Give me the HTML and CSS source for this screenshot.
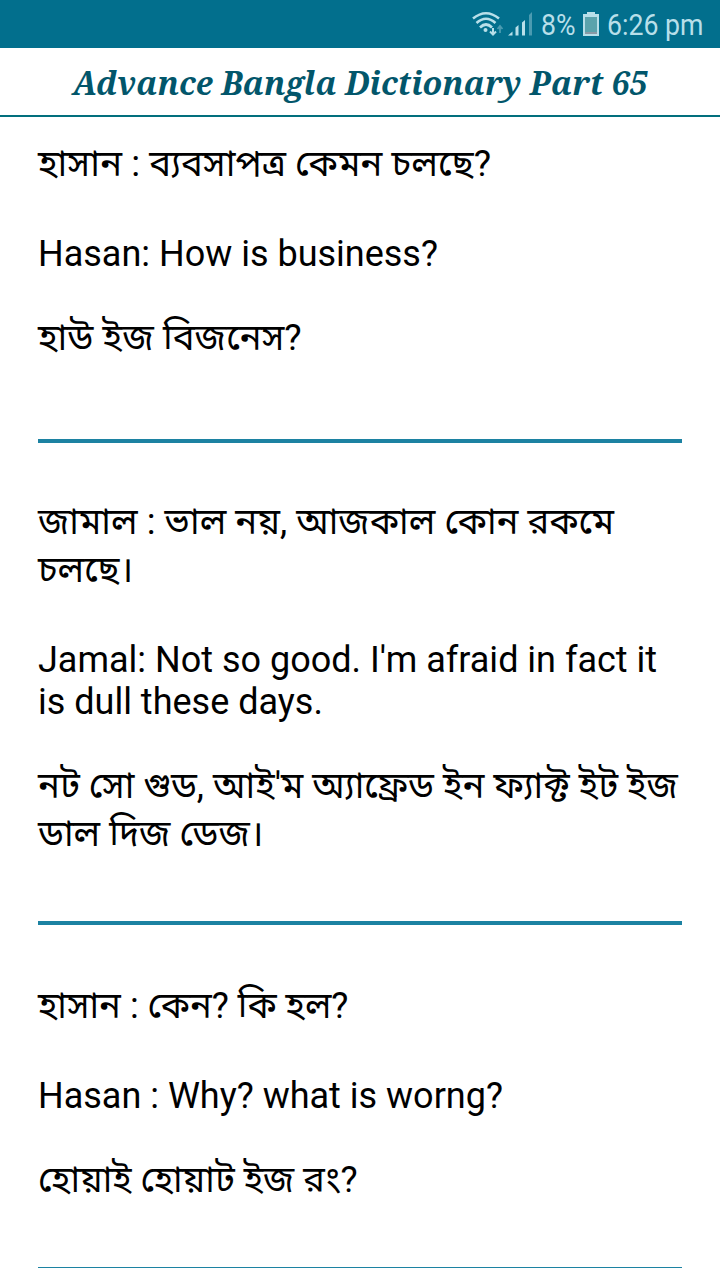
FILE: index.html
```
<!DOCTYPE html>
<html lang="bn">
<head>
  <meta charset="utf-8">
  <title>Advance Bangla Dictionary Part 65</title>
  <meta name="viewport" content="width=device-width, initial-scale=1.0">
  <link rel="stylesheet" href="styles.css">
</head>
<body>
  <div class="status-bar">
    <svg class="wifi" viewBox="0 0 32 26" width="32" height="26">
      <g fill="none" stroke="currentColor" stroke-width="2.6">
        <path d="M1 7.500Q14-3 27 7.500"/>
        <path d="M4.500 12Q14 3.500 23.500 12"/>
        <path d="M8 16.500Q14 10.500 20 16.500"/>
      </g>
      <circle cx="13.500" cy="19" r="2" fill="currentColor"/>
      <path d="M21 17v6M18 20.500l3 3 3-3" fill="none" stroke="currentColor" stroke-width="2"/>
      <path d="M28 22v-7M25.500 18l2.500-3 2.500 3" fill="none" stroke="currentColor" stroke-width="1.800" opacity=".4"/>
    </svg>
    <svg class="signal" viewBox="0 0 25 24" width="25" height="24">
      <path d="M0 23.500l4.500-4v4zM7.500 15.500l3-2.500v10.500h-3zM14 10.500l3-2.500v15.500h-3z" fill="currentColor"/>
      <path d="M21 3l3-3v23.500h-3z" fill="currentColor" opacity=".4"/>
    </svg>
    <span class="percent">8%</span>
    <svg class="battery" viewBox="0 0 16 24" width="16" height="24">
      <path d="M4 0h8v2h4v22H0V2h4z" fill="currentColor"/>
      <path d="M2 5h12v15H2z" fill="#5ba3ac"/>
      <path d="M2 20h12v2H2z" fill="#8a9aa6"/>
    </svg>
    <span class="clock">6:26 pm</span>
  </div>

  <h1 class="title">Advance Bangla Dictionary Part 65</h1>

  <div class="content">
    <div class="dialog first">
      <p class="bn">হাসান : ব্যবসাপত্র কেমন চলছে?</p>
      <p class="en">Hasan: How is business?</p>
      <p class="bn">হাউ ইজ বিজনেস?</p>
    </div>
    <div class="dialog">
      <p class="bn">জামাল : ভাল নয়, আজকাল কোন রকমে<br>চলছে।</p>
      <p class="en">Jamal: Not so good. I'm afraid in fact it<br>is dull these days.</p>
      <p class="bn">নট সো গুড, আই'ম অ্যাফ্রেড ইন ফ্যাক্ট ইট ইজ<br>ডাল দিজ ডেজ।</p>
    </div>
    <div class="dialog last">
      <p class="bn">হাসান : কেন? কি হল?</p>
      <p class="en">Hasan : Why? what is worng?</p>
      <p class="bn">হোয়াই হোয়াট ইজ রং?</p>
    </div>
  </div>
</body>
</html>
```
FILE: styles.css
```
body {
  margin: 0;
  height: 1280px;
  overflow: hidden;
  background: #fff;
  color: #000;
  font-family: Roboto, "Noto Sans Bengali", "Noto Sans", sans-serif;
}
.status-bar {
  display: flex;
  align-items: center;
  justify-content: flex-end;
  height: 48px;
  padding-right: 17px;
  background: #026f8d;
  color: #b8dfe9;
  font-size: 30px;
}
.wifi {
  margin-right: 4px;
}
.signal {
  margin-right: 8px;
}
.percent, .clock {
  white-space: nowrap;
  transform: scaleX(.89);
  transform-origin: right;
}
.percent {
  width: 34px;
  transform-origin: left;
}
.battery {
  margin: 0 -4px 0 8px;
}
.title {
  box-sizing: border-box;
  height: 69px;
  margin: 0;
  border-bottom: 2px solid #026f7d;
  color: #02566b;
  font: italic bold 32px/69px "Noto Serif", "Liberation Serif", serif;
  text-align: center;
  white-space: nowrap;
}
.content {
  padding: 23px 38px 0;
}
.dialog {
  margin-bottom: 57px;
  padding-bottom: 63px;
  border-bottom: 4px solid #1c82a2;
}
.first {
  margin-bottom: 55px;
  padding-bottom: 77px;
}
.last {
  border-bottom: 1px solid #1c82a2;
}
p {
  margin: 0;
  font-size: 36px;
  line-height: 42px;
  white-space: nowrap;
}
.en {
  margin: 45px 0 39px;
}
.bn {
  font-size: 36.4px;
  line-height: 48px;
}
.first .bn {
  font-size: 36.7px;
}
.last .bn {
  font-size: 36.2px;
}
```
